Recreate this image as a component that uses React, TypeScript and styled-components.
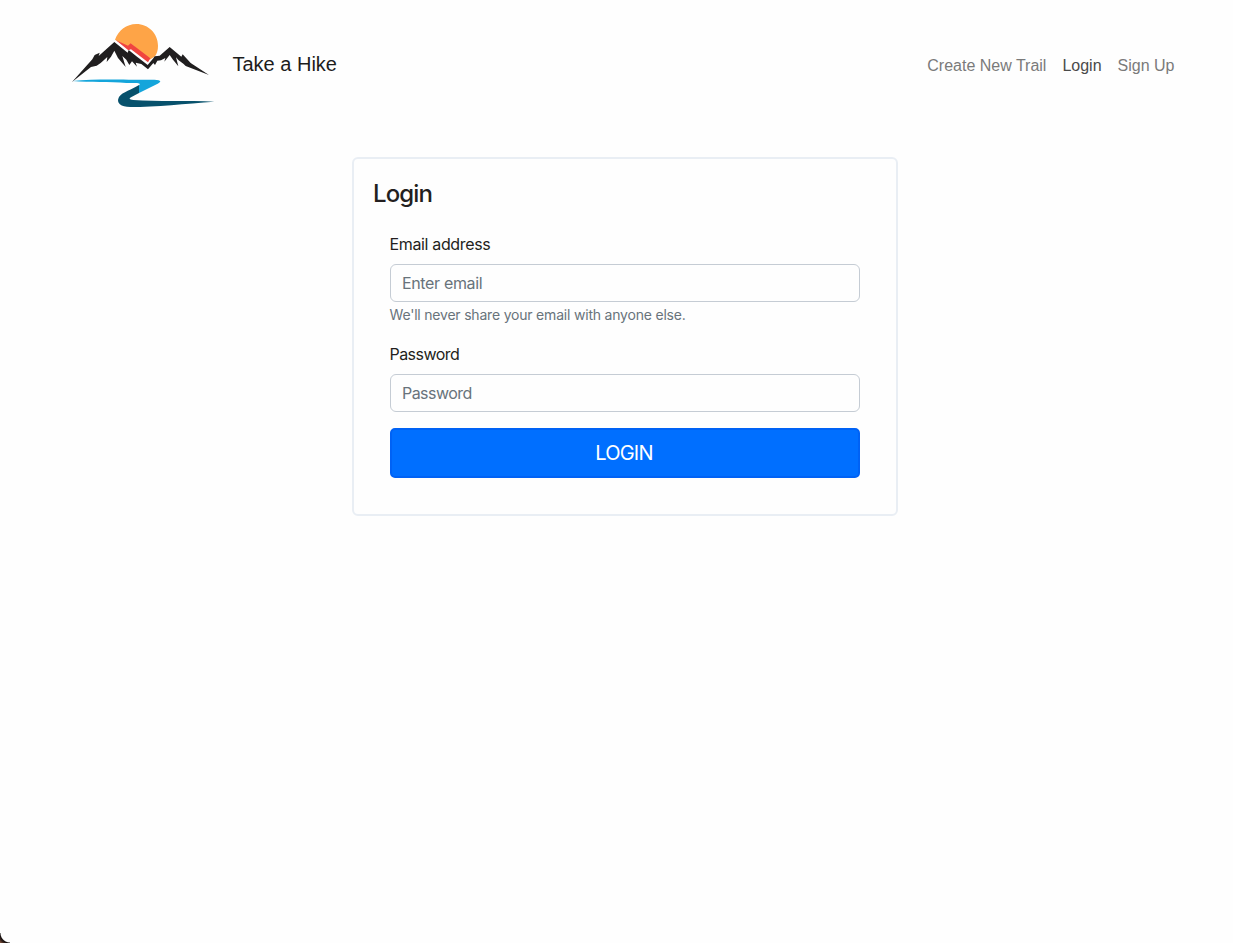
import React from "react";
import styled, { createGlobalStyle } from "styled-components";

const GlobalStyle = createGlobalStyle`
  *, *::before, *::after { box-sizing: border-box; }
  body {
    margin: 0;
    background: #fefefe;
    color: #212529;
    font: 400 16px/24px Inter, sans-serif;
    overflow: hidden;
  }
`;

const Page = styled.div`
  width: 1250px;
  height: 943px;
`;

const Header = styled.header`
  display: flex;
  align-items: center;
  height: 130px;
  padding: 0 75.5px 0 60px;
  font-family: "Liberation Sans", sans-serif;
`;

const Brand = styled.a`
  display: flex;
  align-items: center;
  gap: 2.5px;
  font-size: 20px;
  line-height: 30px;
  color: #1c1c1c;
`;

const BrandName = styled.span`
  padding-bottom: 2px;
`;

const Logo = styled.svg`
  display: block;
  width: 170px;
  height: 110px;
`;

const Nav = styled.nav`
  display: flex;
  gap: 16px;
  margin-left: auto;
  padding-top: 2px;
`;

const NavLink = styled.a<{ $active?: boolean }>`
  color: ${(p) => (p.$active ? "#4a4a4a" : "#7a7a7a")};
`;

const Card = styled.main`
  width: 546px;
  height: 359px;
  margin: 27px auto 0;
  padding: 20px 19px;
  border: 2px solid #e9eef4;
  border-radius: 6px;
`;

const Title = styled.h1`
  margin: 0;
  font-size: 24px;
  line-height: 29px;
  font-weight: 500;
  letter-spacing: -0.9px;
  color: #231f20;
`;

const Form = styled.form`
  display: flex;
  flex-direction: column;
  gap: 16px;
  padding: 24px 17px 0;
`;

const Field = styled.div<{ $tracking: string }>`
  display: flex;
  flex-direction: column;
  letter-spacing: ${(p) => p.$tracking};
`;

const Label = styled.label`
  margin: 0 0 8px -0.5px;
  color: #231f20;
`;

const Input = styled.input`
  height: 38px;
  padding: 0 11px;
  border: 1px solid #c5ccd4;
  border-radius: 6px;
  background: #fefefe;
  font: inherit;
  letter-spacing: inherit;
  &::placeholder { color: #68737b; opacity: 1; }
`;

const Hint = styled.small`
  margin: 2px 0 1px -0.5px;
  font-size: 14px;
  line-height: 21px;
  letter-spacing: -0.2px;
  color: #68737b;
`;

const Submit = styled.button`
  height: 50px;
  padding: 0 2px 0 0;
  border: 2px solid #0062f5;
  border-radius: 5px;
  background: #006fff;
  color: #fff;
  font: 400 20px/30px Inter, sans-serif;
  letter-spacing: -0.8px;
`;

const WindowCorner = styled.div`
  position: fixed;
  left: 0;
  bottom: 0;
  width: 10px;
  height: 10px;
  background: radial-gradient(circle at 10px 0, transparent 9px, #15100e 10px, #2a1b16 11px, #8a5a44 14px);
`;

const HikeLogo = () => (
  <Logo viewBox="0 0 510 330" aria-hidden="true">
    <path fill="#fea447" d="M165 89C176 61 199 42 229 42C265 42 294 71 294 107C294 121 291 129 285 139L269 149L213 101L205 112Z" />
    <path fill="#f0443f" d="M167 90L204 107L212 100L271 145L264 157L213 118L205 121Z" />
    <path
      fill="#201e1f"
      d="M36 216L97 148L104 135L119 128L116 138L163 96L203 128L206 120L232 141L237 145L263 165L280 145L284 139L299 137L329 111L364 140L368 133L392 159L447 195L377 168L370 161L355 150L348 142L355 169L339 149L329 135L313 155L316 144L303 151L292 152L285 165L280 159L264 178L244 162L227 158L231 170L216 154L208 165L199 149L187 138L197 171L174 144L163 122L153 140L140 156L142 141L122 159L110 167L93 171Z"
    />
    <path fill="#14a5db" d="M38 213C92 207 165 208 224 209L283 209C306 210 304 215 293 221L237 249V226C246 217 228 219 199 219C149 215 91 218 38 213Z" />
    <path fill="#07516c" d="M237 225V249L213 262C206 266 208 269 220 270C290 275 384 271 463 275C377 281 288 291 211 291C183 291 167 279 177 261C187 246 217 238 237 225Z" />
  </Logo>
);

export default function App() {
  return (
    <Page>
      <GlobalStyle />
      <Header>
        <Brand>
          <HikeLogo />
          <BrandName>Take a Hike</BrandName>
        </Brand>
        <Nav>
          <NavLink>Create New Trail</NavLink>
          <NavLink $active>Login</NavLink>
          <NavLink>Sign Up</NavLink>
        </Nav>
      </Header>
      <Card>
        <Title>Login</Title>
        <Form>
          <Field $tracking="-0.35px">
            <Label htmlFor="email">Email address</Label>
            <Input id="email" type="email" placeholder="Enter email" />
            <Hint>We'll never share your email with anyone else.</Hint>
          </Field>
          <Field $tracking="-0.55px">
            <Label htmlFor="password">Password</Label>
            <Input id="password" type="password" placeholder="Password" />
          </Field>
          <Submit type="button">LOGIN</Submit>
        </Form>
      </Card>
      <WindowCorner />
    </Page>
  );
}
